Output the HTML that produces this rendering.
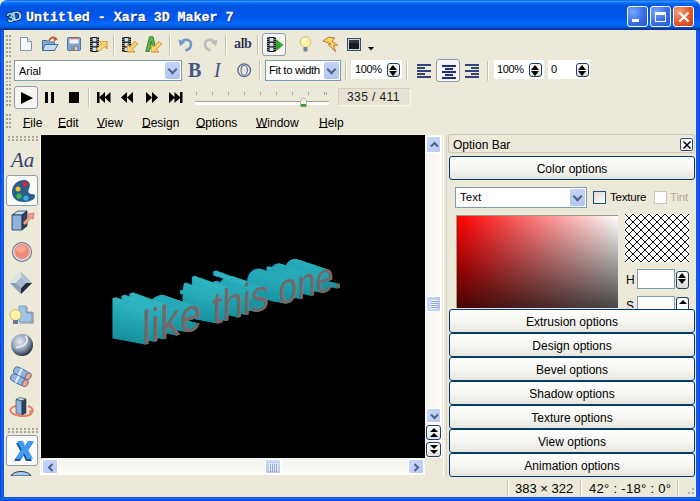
<!DOCTYPE html>
<html><head><meta charset="utf-8">
<style>
*{margin:0;padding:0;box-sizing:border-box}
html,body{width:700px;height:501px;overflow:hidden;background:#ECE9D8}
body{position:relative;font-family:"Liberation Sans",sans-serif;font-size:12px;color:#000}
.a{position:absolute}
.grip{position:absolute;width:5px;background-image:linear-gradient(to right,#A9A697 2px,transparent 2px);background-size:3px 4px;-webkit-mask-image:linear-gradient(to bottom,#000 2px,transparent 2px);-webkit-mask-size:3px 4px}
.hgrip{position:absolute;height:5px;background-image:linear-gradient(to right,#A9A697 2px,transparent 2px);background-size:4px 3px;-webkit-mask-image:linear-gradient(to bottom,#000 2px,transparent 2px);-webkit-mask-size:4px 3px}
.sep{position:absolute;width:2px;border-left:1px solid #C5C2B2;border-right:1px solid #fff}
.pressed{position:absolute;border:1px solid #8E9CB5;border-radius:3px;background:#F6F5EF}
.combo{position:absolute;background:#fff;border:1px solid #7F9DB9}
.dd{position:absolute;right:1px;top:1px;bottom:1px;width:15px;background:linear-gradient(#C6D3F7,#B0C4F2);border-radius:2px}
.dd:after{content:"";position:absolute;left:4px;top:4px;width:5px;height:5px;border-right:2px solid #4D6185;border-bottom:2px solid #4D6185;transform:rotate(45deg)}
.spin{position:absolute;width:13px;height:14px;border:1px solid #1C3F6E;border-radius:3px;background:linear-gradient(#fff,#DCDCD0)}
.spin:before{content:"";position:absolute;left:1px;top:1px;border-left:4.5px solid transparent;border-right:4.5px solid transparent;border-bottom:5px solid #000}
.spin:after{content:"";position:absolute;left:1px;top:7px;border-left:4.5px solid transparent;border-right:4.5px solid transparent;border-top:5px solid #000}
.menu{position:absolute;top:116px;font-size:12px}
.menu u{text-decoration:underline;text-underline-offset:0px;text-decoration-thickness:1px}
.obtn{position:absolute;left:449px;width:246px;height:24px;border:1px solid #003C74;border-radius:3px;background:linear-gradient(#FFFFFF,#F3F3EF 60%,#E6E5DC);text-align:center;line-height:25px;font-size:12px;color:#000}
.sbtn{position:absolute;width:15px;height:15px;border-radius:2px;background:linear-gradient(135deg,#C8D6FB,#B7CAF5);border:1px solid #fff}
</style></head><body>
<!-- window frame -->
<div class="a" style="left:0;top:0;width:700px;height:30px;border-radius:7px 7px 0 0;background:linear-gradient(to bottom,#0058ee 0%,#3593ff 4%,#288eff 6%,#127dff 8%,#036ffc 10%,#0262ee 14%,#0057e5 20%,#0054e3 24%,#0055eb 56%,#005bf5 66%,#026afe 76%,#0062ef 86%,#0052d6 92%,#0040ab 94%,#003092 100%)"></div>
<div class="a" style="left:0;top:30px;width:4px;height:471px;background:linear-gradient(to right,#0831D9,#166AEE 50%,#0855DD)"></div>
<div class="a" style="left:696px;top:30px;width:4px;height:471px;background:linear-gradient(to right,#0855DD,#166AEE 50%,#0831D9)"></div>
<div class="a" style="left:0;top:497px;width:700px;height:4px;background:linear-gradient(#0855DD,#166AEE 50%,#0831D9)"></div>
<!-- title -->
<svg class="a" style="left:5px;top:7px" width="19" height="17" viewBox="0 0 19 17"><text x="1.5" y="14" font-family="Liberation Sans" font-weight="bold" font-size="13" fill="#A4DAF4" stroke="#08265A" stroke-width="1.6" paint-order="stroke" letter-spacing="-1.5" transform="rotate(-12 9 9)">3D</text></svg>
<div class="a" style="left:26px;top:10px;font-family:'Liberation Mono',monospace;font-weight:bold;font-size:13.3px;color:#fff;-webkit-text-stroke:0.3px #fff;text-shadow:1px 1px 0 #0A1E6A;white-space:pre;line-height:16px">Untitled - Xara 3D Maker 7</div>
<!-- title buttons -->
<div class="a" style="left:627px;top:6px;width:21px;height:21px;border:1px solid #fff;border-radius:3px;background:radial-gradient(circle at 25% 25%,#7AA6FA,#3A6EE8 55%,#2554D6)"><div class="a" style="left:4px;top:12px;width:7px;height:3px;background:#fff"></div></div>
<div class="a" style="left:650px;top:6px;width:21px;height:21px;border:1px solid #fff;border-radius:3px;background:radial-gradient(circle at 25% 25%,#7AA6FA,#3A6EE8 55%,#2554D6)"><div class="a" style="left:4px;top:5px;width:11px;height:10px;border:1px solid #fff;border-top-width:3px"></div></div>
<div class="a" style="left:673px;top:6px;width:21px;height:21px;border:1px solid #fff;border-radius:3px;background:radial-gradient(circle at 25% 25%,#F7A080,#DF5A2C 55%,#C8401A)">
<svg class="a" style="left:4px;top:4px" width="12" height="12"><path d="M1.5 1.5L10.5 10.5M10.5 1.5L1.5 10.5" stroke="#fff" stroke-width="2.2"/></svg></div>

<!-- toolbar grips -->
<div class="grip" style="left:6px;top:35px;height:22px"></div>
<div class="grip" style="left:6px;top:61px;height:21px"></div>
<div class="grip" style="left:6px;top:84px;height:23px"></div>
<div class="grip" style="left:6px;top:114px;height:16px"></div>
<!-- row1 icons -->
<svg class="a" style="left:19px;top:36px" width="14" height="16" viewBox="0 0 14 16"><path d="M1.5 1.5H8.5L12.5 5.5V14.5H1.5Z" fill="#F6F9FD" stroke="#8098B5"/><path d="M8.5 1.5V5.5H12.5" fill="#DCE5F0" stroke="#8098B5"/></svg>
<svg class="a" style="left:41px;top:35px" width="18" height="17" viewBox="0 0 18 17"><path d="M1.5 5.5H6L7 7H13.5V15.5H1.5Z" fill="#86AED8" stroke="#3A6A9E"/><path d="M4 9.5H17L13.5 15.5H1.5Z" fill="#C4DCF2" stroke="#3A6A9E"/><path d="M8 6C9 2.5 12 1.5 14.5 3.5" fill="none" stroke="#C9543E" stroke-width="1.8"/><path d="M12.5 1.5L17 4L13 6.5Z" fill="#C9543E"/></svg>
<svg class="a" style="left:66px;top:36px" width="16" height="16" viewBox="0 0 16 16"><rect x="1.5" y="1.5" width="13" height="13" rx="1" fill="#7DA6D4" stroke="#4C74A4"/><rect x="3.5" y="2" width="9" height="5.5" fill="#F2F5F8"/><rect x="3.5" y="2" width="9" height="1.3" fill="#E07A64"/><rect x="5" y="10" width="7" height="4.5" fill="#8C8C90"/><rect x="9" y="11" width="2" height="3" fill="#D8D8D8"/></svg>
<svg class="a" style="left:90px;top:37px" width="9" height="15" viewBox="0 0 9 15"><rect x="0" y="0" width="9" height="15" fill="#141414"/><path d="M1 0V15M8 0V15" stroke="#E8E8E8" stroke-width="1" stroke-dasharray="1 1"/><rect x="2.5" y="1" width="4" height="3.5" fill="#CFE0F5"/><rect x="2.5" y="5.8" width="4" height="3.5" fill="#CFE0F5"/><rect x="2.5" y="10.5" width="4" height="3.5" fill="#CFE0F5"/></svg>
<svg class="a" style="left:96px;top:41px" width="12" height="12" viewBox="0 0 12 12"><path d="M10 0H11V8L8.3 5.3L3 10.6L0.4 8L5.7 2.7L3 0Z" fill="#F9D66A" stroke="#C9762C" stroke-width="0.8"/></svg>
<div class="sep" style="left:113px;top:35px;height:20px"></div>
<svg class="a" style="left:122px;top:37px" width="9" height="15" viewBox="0 0 9 15"><rect x="0" y="0" width="9" height="15" fill="#141414"/><path d="M1 0V15M8 0V15" stroke="#E8E8E8" stroke-width="1" stroke-dasharray="1 1"/><rect x="2.5" y="1" width="4" height="3.5" fill="#CFE0F5"/><rect x="2.5" y="5.8" width="4" height="3.5" fill="#CFE0F5"/><rect x="2.5" y="10.5" width="4" height="3.5" fill="#CFE0F5"/></svg>
<svg class="a" style="left:127px;top:41px" width="12" height="12" viewBox="0 0 12 12"><path d="M1 11H0V3L2.7 5.7L8 0.4L10.6 3L5.3 8.3L8 11Z" fill="#F9D66A" stroke="#C9762C" stroke-width="0.8"/></svg>
<svg class="a" style="left:145px;top:36px" width="12" height="16" viewBox="0 0 12 16"><path d="M0.8 15.5L4.5 0.8H8L11.5 15.5H8.3L7.6 12H4.9L4.2 15.5Z M5.5 9H7L6.25 5Z" fill="#5DBB4C" stroke="#2F7A2A" stroke-width="0.9" fill-rule="evenodd"/></svg>
<svg class="a" style="left:151px;top:41px" width="12" height="12" viewBox="0 0 12 12"><path d="M1 11H0V3L2.7 5.7L8 0.4L10.6 3L5.3 8.3L8 11Z" fill="#F9D66A" stroke="#C9762C" stroke-width="0.8"/></svg>
<div class="sep" style="left:169px;top:35px;height:20px"></div>
<svg class="a" style="left:178px;top:36px" width="16" height="16" viewBox="0 0 16 16"><path d="M4.5 5C8 2.5 13.5 4 13 9C12.5 12.5 9.5 14 7.5 14.5" fill="none" stroke="#6B97C9" stroke-width="2.4"/><path d="M0.5 3.5L2 10L7.5 6Z" fill="#6B97C9"/></svg>
<svg class="a" style="left:202px;top:36px" width="16" height="16" viewBox="0 0 16 16"><path d="M11.5 5C8 2.5 2.5 4 3 9C3.5 12.5 6.5 14 8.5 14.5" fill="none" stroke="#BDBDBD" stroke-width="2.4"/><path d="M15.5 3.5L14 10L8.5 6Z" fill="#BDBDBD"/></svg>
<div class="sep" style="left:225px;top:35px;height:20px"></div>
<div class="a" style="left:234px;top:36px;font-family:'Liberation Serif';font-weight:bold;font-size:14px;color:#2E3E66;letter-spacing:-0.8px;line-height:16px">a<span style="font-weight:normal;color:#000">I</span>b</div>
<div class="sep" style="left:257px;top:35px;height:20px"></div>
<div class="pressed" style="left:262px;top:33px;width:24px;height:23px"></div>
<svg class="a" style="left:267px;top:37px" width="9" height="15" viewBox="0 0 9 15"><rect x="0" y="0" width="9" height="15" fill="#141414"/><path d="M1 0V15M8 0V15" stroke="#E8E8E8" stroke-width="1" stroke-dasharray="1 1"/><rect x="2.5" y="1" width="4" height="3.5" fill="#CFE0F5"/><rect x="2.5" y="5.8" width="4" height="3.5" fill="#CFE0F5"/><rect x="2.5" y="10.5" width="4" height="3.5" fill="#CFE0F5"/></svg>
<svg class="a" style="left:276px;top:39px" width="8" height="12" viewBox="0 0 8 12"><path d="M0 0L7.5 6L0 12Z" fill="#2FA62F"/></svg>
<svg class="a" style="left:299px;top:36px" width="13" height="17" viewBox="0 0 13 17"><circle cx="6.5" cy="6" r="5.3" fill="#FFF0A0" stroke="#CDB05A" stroke-width="0.8"/><ellipse cx="5" cy="4.5" rx="2.2" ry="1.8" fill="#FFFCE8"/><rect x="4.5" y="11" width="4" height="4.5" rx="0.8" fill="#6E86A0"/></svg>
<svg class="a" style="left:322px;top:36px" width="17" height="17" viewBox="0 0 17 17"><path d="M1 5L6.5 1.2L13 2L10 5.2L15.5 9L11.5 9.5L13.5 15.5L6 8.5L9 7.8Z" fill="#F8D95A" stroke="#B4683A" stroke-width="0.9" stroke-linejoin="round"/></svg>
<svg class="a" style="left:347px;top:38px" width="14" height="13" viewBox="0 0 14 13"><rect x="0.5" y="0.5" width="13" height="12" fill="#B9D4EE" stroke="#3E4E66"/><rect x="2" y="2" width="10" height="9" fill="#1A1A1A"/><rect x="2" y="2" width="10" height="3" fill="#383838"/></svg>
<svg class="a" style="left:368px;top:47px" width="7" height="4"><path d="M0 0H6L3 3.5Z" fill="#000"/></svg>
<!-- row2 -->
<div class="combo" style="left:14px;top:60px;width:168px;height:21px"><div class="a" style="left:4px;top:4px;font-size:11px">Arial</div><div class="dd"></div></div>
<div class="a" style="left:188px;top:58px;font-family:'Liberation Serif';font-weight:bold;font-size:20px;line-height:24px;color:#44578A">B</div>
<div class="a" style="left:214px;top:58px;font-family:'Liberation Serif';font-style:italic;font-size:20px;line-height:24px;color:#44578A">I</div>
<svg class="a" style="left:237px;top:63px" width="15" height="15" viewBox="0 0 15 15"><ellipse cx="7.2" cy="7.2" rx="6.3" ry="6.4" fill="none" stroke="#5A6C98" stroke-width="1.3"/><ellipse cx="7.2" cy="7.2" rx="3.2" ry="5" fill="none" stroke="#5A6C98" stroke-width="1.1"/></svg>
<div class="sep" style="left:259px;top:61px;height:20px"></div>
<div class="combo" style="left:265px;top:60px;width:76px;height:21px"><div class="a" style="left:3px;top:3px;font-size:11.5px;letter-spacing:-0.4px">Fit to width</div><div class="dd"></div></div>
<div class="sep" style="left:345px;top:61px;height:20px"></div>
<div class="a" style="left:351px;top:60px;width:51px;height:19px;background:#fff"><div class="a" style="left:4px;top:3px;font-size:11px;letter-spacing:-0.4px">100%</div></div>
<div class="spin" style="left:387px;top:63px"></div>
<div class="sep" style="left:406px;top:61px;height:20px"></div>
<svg class="a" style="left:417px;top:64px" width="15" height="15" viewBox="0 0 15 15"><path d="M0 1H14M0 4H8M0 7H14M0 10H8M0 13H14" stroke="#34447A" stroke-width="2"/></svg>
<div class="pressed" style="left:436px;top:59px;width:24px;height:23px"></div>
<svg class="a" style="left:442px;top:65px" width="15" height="15" viewBox="0 0 15 15"><path d="M0 1H14M3 4H11M0 7H14M3 10H11M0 13H14" stroke="#1E2E78" stroke-width="2"/></svg>
<svg class="a" style="left:465px;top:64px" width="15" height="15" viewBox="0 0 15 15"><path d="M0 1H14M6 4H14M0 7H14M6 10H14M0 13H14" stroke="#34447A" stroke-width="2"/></svg>
<div class="sep" style="left:487px;top:61px;height:20px"></div>
<div class="a" style="left:494px;top:60px;width:50px;height:19px;background:#fff"><div class="a" style="left:3px;top:3px;font-size:11px;letter-spacing:-0.4px">100%</div></div>
<div class="spin" style="left:529px;top:63px"></div>
<div class="a" style="left:548px;top:60px;width:42px;height:19px;background:#fff"><div class="a" style="left:3px;top:3px;font-size:11px">0</div></div>
<div class="spin" style="left:576px;top:63px"></div>
<!-- row3 -->
<div class="pressed" style="left:14px;top:86px;width:24px;height:23px"></div>
<svg class="a" style="left:20px;top:91px" width="14" height="14"><path d="M1 1L13 7L1 13Z" fill="#000"/></svg>
<svg class="a" style="left:45px;top:92px" width="10" height="12"><rect x="0" y="0" width="3" height="11" fill="#000"/><rect x="6" y="0" width="3" height="11" fill="#000"/></svg>
<svg class="a" style="left:69px;top:92px" width="11" height="12"><rect x="0" y="0" width="10" height="11" fill="#000"/></svg>
<div class="sep" style="left:88px;top:87px;height:20px"></div>
<svg class="a" style="left:97px;top:92px" width="14" height="12"><rect x="0" y="0" width="2.5" height="11" fill="#000"/><path d="M8 0V11L2 5.5Z M13.5 0V11L7.5 5.5Z" fill="#000"/></svg>
<svg class="a" style="left:121px;top:92px" width="13" height="12"><path d="M6 0V11L0 5.5Z M12 0V11L6 5.5Z" fill="#000"/></svg>
<svg class="a" style="left:146px;top:92px" width="13" height="12"><path d="M0 0V11L6 5.5Z M6 0V11L12 5.5Z" fill="#000"/></svg>
<svg class="a" style="left:169px;top:92px" width="14" height="12"><path d="M0 0V11L6 5.5Z M5.5 0V11L11.5 5.5Z" fill="#000"/><rect x="11" y="0" width="2.5" height="11" fill="#000"/></svg>
<div class="a" style="left:196px;top:92px;width:130px;height:3px;background-image:linear-gradient(to right,#A9A697 1px,transparent 1px);background-size:16px 3px"></div>
<div class="a" style="left:326px;top:92px;width:1px;height:3px;background:#A9A697"></div>
<div class="a" style="left:195px;top:101px;width:134px;height:4px;border-top:1px solid #A19E8E;background:#fff;border-radius:1px"></div>
<svg class="a" style="left:300px;top:97px" width="7" height="10" viewBox="0 0 7 10"><path d="M0.5 9.5V4L3.5 0.5L6.5 4V9.5Z" fill="#F4F3EE" stroke="#A8A594" stroke-width="0.8"/><rect x="1" y="7" width="5" height="2.5" fill="#27A338"/></svg>
<div class="a" style="left:338px;top:88px;width:73px;height:18px;background:#E6E3D2;border-top:1px solid #D2CFBE;border-left:1px solid #D2CFBE;border-bottom:1px solid #F8F7F0;border-right:1px solid #F8F7F0"><div class="a" style="left:8px;top:1px;font-size:12px;letter-spacing:0.4px;color:#1A1A1A">335 / 411</div></div>
<!-- menu -->
<div class="menu" style="left:23px"><u>F</u>ile</div>
<div class="menu" style="left:58px"><u>E</u>dit</div>
<div class="menu" style="left:97px"><u>V</u>iew</div>
<div class="menu" style="left:142px"><u>D</u>esign</div>
<div class="menu" style="left:196px"><u>O</u>ptions</div>
<div class="menu" style="left:256px"><u>W</u>indow</div>
<div class="menu" style="left:319px"><u>H</u>elp</div>

<!-- left toolbar -->
<div class="hgrip" style="left:8px;top:136px;width:30px"></div>
<div class="a" style="left:11px;top:148px;font-family:'Liberation Serif';font-style:italic;font-size:21px;color:#33446E;letter-spacing:0px">Aa</div>
<div class="pressed" style="left:6px;top:175px;width:32px;height:31px;background:#FBFBF8"></div>
<svg class="a" style="left:11px;top:179px" width="25" height="24" viewBox="0 0 25 24"><path d="M13 1C6 1 1 6 1 13C1 19 6 23 12 23C18 23 24 21 24 17C24 14 20 16 18 14C16 12 19 9 19 6C19 3 16 1 13 1Z" fill="#2D5E8C"/><circle cx="14" cy="5" r="2.5" fill="#E8232A"/><circle cx="7" cy="10" r="2.5" fill="#F2C32E"/><circle cx="8" cy="17" r="2.6" fill="#34C23A"/><circle cx="15" cy="19" r="2.6" fill="#2FB4F0"/></svg>
<svg class="a" style="left:10px;top:209px" width="25" height="24" viewBox="0 0 25 24"><path d="M2 6L8 2H17L12 6Z" fill="#C7DDF2" stroke="#1F3550" stroke-width="0.8"/><path d="M2 6H12V21H2Z" fill="#8FB4D8" stroke="#1F3550" stroke-width="0.8"/><path d="M12 6L17 2V17L12 21Z" fill="#2F4258" stroke="#1F3550" stroke-width="0.8"/><path d="M13 14L19 7L18 5L24 4L23 10L21 9L15 16Z" fill="#F2A08A" stroke="#C85A44" stroke-width="0.6"/></svg>
<svg class="a" style="left:11px;top:241px" width="22" height="22" viewBox="0 0 22 22"><circle cx="11" cy="11" r="10" fill="#6A6E84"/><circle cx="11" cy="11" r="9" fill="#D8D9E4"/><circle cx="11" cy="10.5" r="7.5" fill="#F08B74"/><ellipse cx="10" cy="8" rx="5" ry="3.5" fill="#F5A592"/></svg>
<svg class="a" style="left:9px;top:271px" width="24" height="24" viewBox="0 0 24 24"><path d="M12 1L23 12L12 23L1 12Z" fill="#9DB0C6"/><path d="M1 12L12 1L12 7L7 12Z" fill="#D9E3EE"/><path d="M12 1L23 12L17 12L12 7Z" fill="#AFC1D5"/><path d="M1 12H7L12 17V23Z" fill="#8CA0B8"/><path d="M23 12L12 23V17L17 12Z" fill="#1F2A38"/><path d="M12 7L17 12L12 17L7 12Z" fill="#A3B6CC"/></svg>
<svg class="a" style="left:9px;top:303px" width="25" height="24" viewBox="0 0 25 24"><path d="M10 3H17V9H23V19H10Z" fill="#9FC4EA" stroke="#6A8DB2" stroke-width="0.8"/><path d="M18 4V10H24V20H11" fill="none" stroke="#8A9099" stroke-width="1.2"/><circle cx="6.5" cy="12" r="5.5" fill="#FFF1A6" stroke="#C9A74A" stroke-width="0.8"/><rect x="4" y="17" width="5" height="4" fill="#6D7A8E"/></svg>
<svg class="a" style="left:10px;top:333px" width="24" height="24" viewBox="0 0 24 24"><defs><radialGradient id="gl" cx="40%" cy="35%" r="65%"><stop offset="0" stop-color="#E8EEF5"/><stop offset="0.6" stop-color="#8C9DB3"/><stop offset="1" stop-color="#2B3645"/></radialGradient></defs><circle cx="12" cy="12" r="11" fill="url(#gl)"/><path d="M6 15C9 12 12 16 16 10C18 7 17 4 15 3" stroke="#F2F5F9" stroke-width="2" fill="none" opacity="0.8"/></svg>
<svg class="a" style="left:9px;top:365px" width="25" height="22" viewBox="0 0 25 22"><g transform="translate(5,4) rotate(27)"><rect x="0" y="-3.8" width="16" height="7.6" rx="3.5" fill="#8FB6E2" stroke="#3D6290" stroke-width="0.8"/><rect x="6" y="-3.8" width="2" height="7.6" fill="#E6EEF8"/><ellipse cx="16" cy="0" rx="2.6" ry="3.8" fill="#F2A585" stroke="#3D6290" stroke-width="0.8"/></g><g transform="translate(2,11) rotate(27)"><rect x="0" y="-3.8" width="16" height="7.6" rx="3.5" fill="#8FB6E2" stroke="#3D6290" stroke-width="0.8"/><rect x="6" y="-3.8" width="2" height="7.6" fill="#E6EEF8"/><ellipse cx="16" cy="0" rx="2.6" ry="3.8" fill="#F2A585" stroke="#3D6290" stroke-width="0.8"/></g></svg>
<svg class="a" style="left:9px;top:396px" width="25" height="24" viewBox="0 0 25 24"><path d="M7 10C3 11 1 13 1.5 15C2.5 18 8 20 13 20C19 20 23 18 23.5 15C24 13 22 11 19 10" fill="none" stroke="#E8806A" stroke-width="2"/><path d="M7 3.5L11 1.5L17 3L13 5Z" fill="#C9DDF2" stroke="#26374D" stroke-width="0.6"/><path d="M7 3.5L13 5V19L7 17Z" fill="#8DB5DE" stroke="#26374D" stroke-width="0.6"/><path d="M13 5L17 3V17L13 19Z" fill="#2E4157" stroke="#26374D" stroke-width="0.6"/><path d="M9 18.5C11 19.5 12 20 13 20C18 20 21 19 22.5 17" fill="none" stroke="#E8806A" stroke-width="2"/><path d="M20 14L25 15L21 19Z" fill="#E8806A"/></svg>
<div class="hgrip" style="left:8px;top:428px;width:30px"></div>
<div class="pressed" style="left:6px;top:435px;width:32px;height:31px;background:#FBFBF8"></div>
<svg class="a" style="left:12px;top:440px" width="22" height="23" viewBox="0 0 22 23"><path d="M4 3H10L12 8L15 3H21L15 11.5L20 21H14L11.5 15.5L8 21H2L8.5 11.5Z" fill="#1F4F92"/><path d="M5 1H11L13 6L16 1H22L16 9.5L21 19H15L12.5 13.5L9 19H3L9.5 9.5Z" fill="#3D9CF2"/></svg>
<svg class="a" style="left:10px;top:469px" width="22" height="7"><path d="M1 7C3 1 19 1 21 7Z" fill="#A8C8EC" stroke="#2A3D55" stroke-width="1"/></svg>
<!-- canvas -->
<div class="a" style="left:40px;top:134px;width:386px;height:1px;background:#F6F5EE"></div><div class="a" style="left:40px;top:134px;width:1px;height:342px;background:#F6F5EE"></div><div class="a" style="left:41px;top:135px;width:384px;height:323px;background:#000;overflow:hidden" id="cv"><svg class="a" style="left:0;top:0" width="385" height="323" font-family="Liberation Sans" font-size="48"><defs><linearGradient id="tg" x1="0" y1="0" x2="0" y2="1"><stop offset="0" stop-color="#36BCCA"/><stop offset="0.5" stop-color="#20A2B0"/><stop offset="1" stop-color="#158490"/></linearGradient></defs><g fill="url(#tg)"><text transform="matrix(0.996,-0.291,0,1.170,68.2,204.7)">l</text><text transform="matrix(0.986,-0.288,0,1.163,77.3,202.0)">i</text><text transform="matrix(0.971,-0.283,0,1.156,85.3,199.4)">k</text><text transform="matrix(0.947,-0.277,0,1.139,105.1,193.5)">e</text><text transform="matrix(0.917,-0.268,0,1.112,138.3,184.1)">t</text><text transform="matrix(0.898,-0.262,0,1.103,147.9,181.0)">h</text><text transform="matrix(0.881,-0.257,0,1.085,169.4,175.0)">i</text><text transform="matrix(0.865,-0.253,0,1.078,176.6,172.6)">s</text><text transform="matrix(0.829,-0.242,0,1.053,203.9,164.5)">o</text><text transform="matrix(0.805,-0.235,0,1.035,222.9,159.0)">n</text><text transform="matrix(0.780,-0.228,0,1.017,241.3,153.6)">e</text><text transform="matrix(0.762,-0.222,0,0.999,259.9,148.3)">&#46;</text></g><g fill="url(#tg)"><text transform="matrix(0.990,-0.289,0,1.163,69.5,204.9)">l</text><text transform="matrix(0.980,-0.286,0,1.156,78.6,202.3)">i</text><text transform="matrix(0.965,-0.282,0,1.149,86.7,199.6)">k</text><text transform="matrix(0.941,-0.275,0,1.132,106.5,193.8)">e</text><text transform="matrix(0.911,-0.266,0,1.106,139.6,184.3)">t</text><text transform="matrix(0.893,-0.261,0,1.097,149.3,181.2)">h</text><text transform="matrix(0.876,-0.256,0,1.079,170.8,175.2)">i</text><text transform="matrix(0.860,-0.251,0,1.072,178.0,172.8)">s</text><text transform="matrix(0.824,-0.241,0,1.047,205.3,164.8)">o</text><text transform="matrix(0.800,-0.234,0,1.029,224.3,159.2)">n</text><text transform="matrix(0.776,-0.226,0,1.011,242.7,153.8)">e</text><text transform="matrix(0.757,-0.221,0,0.993,261.3,148.6)">&#46;</text></g><g fill="url(#tg)"><text transform="matrix(0.984,-0.287,0,1.156,70.9,205.2)">l</text><text transform="matrix(0.975,-0.285,0,1.149,80.0,202.5)">i</text><text transform="matrix(0.959,-0.280,0,1.142,88.2,199.9)">k</text><text transform="matrix(0.936,-0.273,0,1.126,107.9,194.0)">e</text><text transform="matrix(0.905,-0.264,0,1.099,141.0,184.6)">t</text><text transform="matrix(0.887,-0.259,0,1.090,150.7,181.5)">h</text><text transform="matrix(0.870,-0.254,0,1.072,172.1,175.5)">i</text><text transform="matrix(0.854,-0.250,0,1.065,179.4,173.1)">s</text><text transform="matrix(0.819,-0.239,0,1.040,206.7,165.0)">o</text><text transform="matrix(0.795,-0.232,0,1.022,225.7,159.5)">n</text><text transform="matrix(0.771,-0.225,0,1.005,244.1,154.1)">e</text><text transform="matrix(0.753,-0.220,0,0.987,262.6,148.8)">&#46;</text></g><g fill="url(#tg)"><text transform="matrix(0.978,-0.286,0,1.149,72.3,205.4)">l</text><text transform="matrix(0.969,-0.283,0,1.142,81.4,202.7)">i</text><text transform="matrix(0.953,-0.278,0,1.135,89.6,200.1)">k</text><text transform="matrix(0.930,-0.272,0,1.119,109.3,194.3)">e</text><text transform="matrix(0.900,-0.263,0,1.092,142.4,184.8)">t</text><text transform="matrix(0.882,-0.257,0,1.083,152.1,181.7)">h</text><text transform="matrix(0.865,-0.253,0,1.066,173.5,175.7)">i</text><text transform="matrix(0.849,-0.248,0,1.059,180.8,173.3)">s</text><text transform="matrix(0.814,-0.238,0,1.034,208.1,165.3)">o</text><text transform="matrix(0.790,-0.231,0,1.016,227.1,159.7)">n</text><text transform="matrix(0.766,-0.224,0,0.998,245.5,154.3)">e</text><text transform="matrix(0.748,-0.218,0,0.981,264.0,149.1)">&#46;</text></g><g fill="url(#tg)"><text transform="matrix(0.972,-0.284,0,1.142,73.6,205.7)">l</text><text transform="matrix(0.963,-0.281,0,1.135,82.7,203.0)">i</text><text transform="matrix(0.947,-0.277,0,1.128,91.0,200.3)">k</text><text transform="matrix(0.924,-0.270,0,1.112,110.7,194.5)">e</text><text transform="matrix(0.894,-0.261,0,1.085,143.7,185.0)">t</text><text transform="matrix(0.876,-0.256,0,1.077,153.5,182.0)">h</text><text transform="matrix(0.860,-0.251,0,1.059,174.9,176.0)">i</text><text transform="matrix(0.844,-0.246,0,1.052,182.2,173.6)">s</text><text transform="matrix(0.809,-0.236,0,1.027,209.5,165.5)">o</text><text transform="matrix(0.785,-0.229,0,1.010,228.5,160.0)">n</text><text transform="matrix(0.761,-0.222,0,0.992,246.9,154.6)">e</text><text transform="matrix(0.743,-0.217,0,0.975,265.4,149.3)">&#46;</text></g><g fill="url(#tg)"><text transform="matrix(0.966,-0.282,0,1.135,75.0,205.9)">l</text><text transform="matrix(0.957,-0.279,0,1.128,84.1,203.2)">i</text><text transform="matrix(0.941,-0.275,0,1.121,92.4,200.6)">k</text><text transform="matrix(0.919,-0.268,0,1.105,112.2,194.7)">e</text><text transform="matrix(0.889,-0.260,0,1.079,145.1,185.3)">t</text><text transform="matrix(0.871,-0.254,0,1.070,154.9,182.2)">h</text><text transform="matrix(0.854,-0.249,0,1.052,176.2,176.2)">i</text><text transform="matrix(0.839,-0.245,0,1.045,183.6,173.8)">s</text><text transform="matrix(0.804,-0.235,0,1.021,210.9,165.8)">o</text><text transform="matrix(0.780,-0.228,0,1.004,229.9,160.2)">n</text><text transform="matrix(0.757,-0.221,0,0.986,248.3,154.8)">e</text><text transform="matrix(0.739,-0.216,0,0.969,266.7,149.6)">&#46;</text></g><g fill="url(#tg)"><text transform="matrix(0.960,-0.280,0,1.127,76.4,206.1)">l</text><text transform="matrix(0.951,-0.278,0,1.121,85.5,203.5)">i</text><text transform="matrix(0.935,-0.273,0,1.114,93.8,200.8)">k</text><text transform="matrix(0.913,-0.267,0,1.098,113.6,195.0)">e</text><text transform="matrix(0.883,-0.258,0,1.072,146.5,185.5)">t</text><text transform="matrix(0.865,-0.253,0,1.063,156.3,182.5)">h</text><text transform="matrix(0.849,-0.248,0,1.046,177.6,176.5)">i</text><text transform="matrix(0.834,-0.243,0,1.039,185.0,174.1)">s</text><text transform="matrix(0.799,-0.233,0,1.015,212.3,166.0)">o</text><text transform="matrix(0.776,-0.226,0,0.997,231.3,160.5)">n</text><text transform="matrix(0.752,-0.220,0,0.980,249.7,155.1)">e</text><text transform="matrix(0.734,-0.214,0,0.963,268.1,149.9)">&#46;</text></g><g fill="url(#tg)"><text transform="matrix(0.954,-0.279,0,1.120,77.7,206.4)">l</text><text transform="matrix(0.945,-0.276,0,1.114,86.8,203.7)">i</text><text transform="matrix(0.929,-0.271,0,1.107,95.2,201.1)">k</text><text transform="matrix(0.907,-0.265,0,1.091,115.0,195.2)">e</text><text transform="matrix(0.878,-0.256,0,1.065,147.9,185.8)">t</text><text transform="matrix(0.860,-0.251,0,1.057,157.7,182.7)">h</text><text transform="matrix(0.844,-0.246,0,1.039,179.0,176.7)">i</text><text transform="matrix(0.828,-0.242,0,1.032,186.4,174.3)">s</text><text transform="matrix(0.794,-0.232,0,1.008,213.7,166.3)">o</text><text transform="matrix(0.771,-0.225,0,0.991,232.7,160.7)">n</text><text transform="matrix(0.747,-0.218,0,0.974,251.1,155.4)">e</text><text transform="matrix(0.730,-0.213,0,0.957,269.5,150.1)">&#46;</text></g><g fill="url(#tg)"><text transform="matrix(0.948,-0.277,0,1.113,79.1,206.6)">l</text><text transform="matrix(0.939,-0.274,0,1.106,88.2,204.0)">i</text><text transform="matrix(0.924,-0.270,0,1.100,96.6,201.3)">k</text><text transform="matrix(0.901,-0.263,0,1.084,116.4,195.5)">e</text><text transform="matrix(0.872,-0.255,0,1.058,149.2,186.0)">t</text><text transform="matrix(0.855,-0.250,0,1.050,159.1,183.0)">h</text><text transform="matrix(0.838,-0.245,0,1.033,180.3,177.0)">i</text><text transform="matrix(0.823,-0.240,0,1.026,187.8,174.6)">s</text><text transform="matrix(0.789,-0.230,0,1.002,215.1,166.6)">o</text><text transform="matrix(0.766,-0.224,0,0.985,234.1,161.0)">n</text><text transform="matrix(0.742,-0.217,0,0.968,252.5,155.6)">e</text><text transform="matrix(0.725,-0.212,0,0.950,270.8,150.4)">&#46;</text></g><g fill="url(#tg)"><text transform="matrix(0.942,-0.275,0,1.106,80.5,206.9)">l</text><text transform="matrix(0.933,-0.272,0,1.099,89.6,204.2)">i</text><text transform="matrix(0.918,-0.268,0,1.093,98.0,201.6)">k</text><text transform="matrix(0.896,-0.262,0,1.077,117.8,195.7)">e</text><text transform="matrix(0.867,-0.253,0,1.052,150.6,186.3)">t</text><text transform="matrix(0.849,-0.248,0,1.043,160.5,183.2)">h</text><text transform="matrix(0.833,-0.243,0,1.026,181.7,177.2)">i</text><text transform="matrix(0.818,-0.239,0,1.019,189.2,174.8)">s</text><text transform="matrix(0.784,-0.229,0,0.996,216.5,166.8)">o</text><text transform="matrix(0.761,-0.222,0,0.979,235.5,161.3)">n</text><text transform="matrix(0.738,-0.215,0,0.961,253.9,155.9)">e</text><text transform="matrix(0.720,-0.210,0,0.944,272.2,150.6)">&#46;</text></g><g fill="url(#tg)"><text transform="matrix(0.936,-0.273,0,1.099,81.8,207.1)">l</text><text transform="matrix(0.927,-0.271,0,1.092,90.9,204.4)">i</text><text transform="matrix(0.912,-0.266,0,1.086,99.4,201.8)">k</text><text transform="matrix(0.890,-0.260,0,1.070,119.2,196.0)">e</text><text transform="matrix(0.861,-0.251,0,1.045,152.0,186.5)">t</text><text transform="matrix(0.844,-0.246,0,1.037,161.9,183.5)">h</text><text transform="matrix(0.828,-0.242,0,1.020,183.0,177.5)">i</text><text transform="matrix(0.813,-0.237,0,1.013,190.6,175.1)">s</text><text transform="matrix(0.779,-0.228,0,0.989,217.9,167.1)">o</text><text transform="matrix(0.756,-0.221,0,0.972,236.9,161.5)">n</text><text transform="matrix(0.733,-0.214,0,0.955,255.3,156.1)">e</text><text transform="matrix(0.716,-0.209,0,0.938,273.6,150.9)">&#46;</text></g><g fill="url(#tg)"><text transform="matrix(0.930,-0.272,0,1.092,83.2,207.3)">l</text><text transform="matrix(0.921,-0.269,0,1.085,92.3,204.7)">i</text><text transform="matrix(0.906,-0.265,0,1.079,100.8,202.0)">k</text><text transform="matrix(0.884,-0.258,0,1.064,120.6,196.2)">e</text><text transform="matrix(0.855,-0.250,0,1.038,153.3,186.8)">t</text><text transform="matrix(0.838,-0.245,0,1.030,163.3,183.7)">h</text><text transform="matrix(0.822,-0.240,0,1.013,184.4,177.7)">i</text><text transform="matrix(0.807,-0.236,0,1.006,192.0,175.3)">s</text><text transform="matrix(0.774,-0.226,0,0.983,219.3,167.3)">o</text><text transform="matrix(0.751,-0.219,0,0.966,238.3,161.8)">n</text><text transform="matrix(0.728,-0.213,0,0.949,256.7,156.4)">e</text><text transform="matrix(0.711,-0.208,0,0.932,274.9,151.2)">&#46;</text></g><g fill="url(#tg)"><text transform="matrix(0.924,-0.270,0,1.085,84.6,207.6)">l</text><text transform="matrix(0.915,-0.267,0,1.078,93.7,204.9)">i</text><text transform="matrix(0.900,-0.263,0,1.072,102.2,202.3)">k</text><text transform="matrix(0.878,-0.256,0,1.057,122.0,196.5)">e</text><text transform="matrix(0.850,-0.248,0,1.032,154.7,187.0)">t</text><text transform="matrix(0.833,-0.243,0,1.023,164.7,184.0)">h</text><text transform="matrix(0.817,-0.239,0,1.006,185.8,177.9)">i</text><text transform="matrix(0.802,-0.234,0,1.000,193.4,175.6)">s</text><text transform="matrix(0.769,-0.225,0,0.976,220.7,167.6)">o</text><text transform="matrix(0.746,-0.218,0,0.960,239.7,162.0)">n</text><text transform="matrix(0.724,-0.211,0,0.943,258.1,156.6)">e</text><text transform="matrix(0.707,-0.206,0,0.926,276.3,151.4)">&#46;</text></g><g fill="url(#tg)"><text transform="matrix(0.918,-0.268,0,1.078,85.9,207.8)">l</text><text transform="matrix(0.909,-0.265,0,1.071,95.0,205.2)">i</text><text transform="matrix(0.894,-0.261,0,1.065,103.6,202.5)">k</text><text transform="matrix(0.873,-0.255,0,1.050,123.4,196.7)">e</text><text transform="matrix(0.844,-0.247,0,1.025,156.1,187.3)">t</text><text transform="matrix(0.827,-0.242,0,1.017,166.1,184.2)">h</text><text transform="matrix(0.812,-0.237,0,1.000,187.1,178.2)">i</text><text transform="matrix(0.797,-0.233,0,0.993,194.8,175.8)">s</text><text transform="matrix(0.764,-0.223,0,0.970,222.1,167.8)">o</text><text transform="matrix(0.741,-0.217,0,0.953,241.1,162.3)">n</text><text transform="matrix(0.719,-0.210,0,0.937,259.5,156.9)">e</text><text transform="matrix(0.702,-0.205,0,0.920,277.7,151.7)">&#46;</text></g><g fill="url(#tg)"><text transform="matrix(0.912,-0.266,0,1.071,87.3,208.1)">l</text><text transform="matrix(0.903,-0.264,0,1.064,96.4,205.4)">i</text><text transform="matrix(0.888,-0.259,0,1.058,105.0,202.8)">k</text><text transform="matrix(0.867,-0.253,0,1.043,124.8,196.9)">e</text><text transform="matrix(0.839,-0.245,0,1.018,157.4,187.5)">t</text><text transform="matrix(0.822,-0.240,0,1.010,167.5,184.5)">h</text><text transform="matrix(0.806,-0.235,0,0.993,188.5,178.4)">i</text><text transform="matrix(0.792,-0.231,0,0.987,196.2,176.1)">s</text><text transform="matrix(0.759,-0.222,0,0.964,223.5,168.1)">o</text><text transform="matrix(0.737,-0.215,0,0.947,242.5,162.5)">n</text><text transform="matrix(0.714,-0.209,0,0.931,260.9,157.1)">e</text><text transform="matrix(0.697,-0.204,0,0.914,279.0,151.9)">&#46;</text></g><g fill="url(#tg)"><text transform="matrix(0.906,-0.264,0,1.064,88.7,208.3)">l</text><text transform="matrix(0.897,-0.262,0,1.057,97.8,205.6)">i</text><text transform="matrix(0.882,-0.258,0,1.051,106.4,203.0)">k</text><text transform="matrix(0.861,-0.251,0,1.036,126.3,197.2)">e</text><text transform="matrix(0.833,-0.243,0,1.011,158.8,187.8)">t</text><text transform="matrix(0.817,-0.238,0,1.003,169.0,184.7)">h</text><text transform="matrix(0.801,-0.234,0,0.987,189.8,178.7)">i</text><text transform="matrix(0.786,-0.230,0,0.980,197.6,176.3)">s</text><text transform="matrix(0.754,-0.220,0,0.957,224.9,168.3)">o</text><text transform="matrix(0.732,-0.214,0,0.941,243.9,162.8)">n</text><text transform="matrix(0.709,-0.207,0,0.925,262.3,157.4)">e</text><text transform="matrix(0.693,-0.202,0,0.908,280.4,152.2)">&#46;</text></g><g fill="url(#tg)"><text transform="matrix(0.900,-0.263,0,1.057,90.0,208.5)">l</text><text transform="matrix(0.891,-0.260,0,1.050,99.1,205.9)">i</text><text transform="matrix(0.876,-0.256,0,1.044,107.8,203.3)">k</text><text transform="matrix(0.855,-0.250,0,1.029,127.7,197.4)">e</text><text transform="matrix(0.828,-0.242,0,1.005,160.2,188.0)">t</text><text transform="matrix(0.811,-0.237,0,0.996,170.4,184.9)">h</text><text transform="matrix(0.796,-0.232,0,0.980,191.2,178.9)">i</text><text transform="matrix(0.781,-0.228,0,0.974,199.0,176.6)">s</text><text transform="matrix(0.749,-0.219,0,0.951,226.3,168.6)">o</text><text transform="matrix(0.727,-0.212,0,0.935,245.3,163.0)">n</text><text transform="matrix(0.705,-0.206,0,0.918,263.7,157.7)">e</text><text transform="matrix(0.688,-0.201,0,0.902,281.7,152.4)">&#46;</text></g><g fill="url(#tg)"><text transform="matrix(0.894,-0.261,0,1.050,91.4,208.8)">l</text><text transform="matrix(0.885,-0.258,0,1.043,100.5,206.1)">i</text><text transform="matrix(0.871,-0.254,0,1.037,109.2,203.5)">k</text><text transform="matrix(0.850,-0.248,0,1.022,129.1,197.7)">e</text><text transform="matrix(0.822,-0.240,0,0.998,161.6,188.3)">t</text><text transform="matrix(0.806,-0.235,0,0.990,171.8,185.2)">h</text><text transform="matrix(0.790,-0.231,0,0.974,192.6,179.2)">i</text><text transform="matrix(0.776,-0.227,0,0.967,200.4,176.8)">s</text><text transform="matrix(0.744,-0.217,0,0.945,227.7,168.8)">o</text><text transform="matrix(0.722,-0.211,0,0.928,246.7,163.3)">n</text><text transform="matrix(0.700,-0.204,0,0.912,265.1,157.9)">e</text><text transform="matrix(0.683,-0.200,0,0.896,283.1,152.7)">&#46;</text></g><g fill="url(#tg)"><text transform="matrix(0.888,-0.259,0,1.042,92.8,209.0)">l</text><text transform="matrix(0.879,-0.257,0,1.036,101.8,206.4)">i</text><text transform="matrix(0.865,-0.253,0,1.030,110.6,203.7)">k</text><text transform="matrix(0.844,-0.246,0,1.015,130.5,197.9)">e</text><text transform="matrix(0.817,-0.238,0,0.991,162.9,188.5)">t</text><text transform="matrix(0.800,-0.234,0,0.983,173.2,185.4)">h</text><text transform="matrix(0.785,-0.229,0,0.967,193.9,179.4)">i</text><text transform="matrix(0.771,-0.225,0,0.961,201.8,177.1)">s</text><text transform="matrix(0.739,-0.216,0,0.938,229.1,169.1)">o</text><text transform="matrix(0.717,-0.209,0,0.922,248.1,163.5)">n</text><text transform="matrix(0.695,-0.203,0,0.906,266.5,158.2)">e</text><text transform="matrix(0.679,-0.198,0,0.890,284.5,153.0)">&#46;</text></g><g fill="url(#tg)"><text transform="matrix(0.882,-0.257,0,1.035,94.1,209.3)">l</text><text transform="matrix(0.873,-0.255,0,1.029,103.2,206.6)">i</text><text transform="matrix(0.859,-0.251,0,1.023,112.0,204.0)">k</text><text transform="matrix(0.838,-0.245,0,1.008,131.9,198.2)">e</text><text transform="matrix(0.811,-0.237,0,0.984,164.3,188.7)">t</text><text transform="matrix(0.795,-0.232,0,0.976,174.6,185.7)">h</text><text transform="matrix(0.780,-0.228,0,0.960,195.3,179.7)">i</text><text transform="matrix(0.765,-0.224,0,0.954,203.2,177.3)">s</text><text transform="matrix(0.734,-0.214,0,0.932,230.5,169.3)">o</text><text transform="matrix(0.712,-0.208,0,0.916,249.5,163.8)">n</text><text transform="matrix(0.691,-0.202,0,0.900,267.9,158.4)">e</text><text transform="matrix(0.674,-0.197,0,0.884,285.8,153.2)">&#46;</text></g><g fill="url(#tg)"><text transform="matrix(0.876,-0.256,0,1.028,95.5,209.5)">l</text><text transform="matrix(0.867,-0.253,0,1.022,104.6,206.9)">i</text><text transform="matrix(0.853,-0.249,0,1.016,113.4,204.2)">k</text><text transform="matrix(0.833,-0.243,0,1.001,133.3,198.4)">e</text><text transform="matrix(0.806,-0.235,0,0.978,165.7,189.0)">t</text><text transform="matrix(0.789,-0.230,0,0.970,176.0,185.9)">h</text><text transform="matrix(0.774,-0.226,0,0.954,196.7,179.9)">i</text><text transform="matrix(0.760,-0.222,0,0.948,204.6,177.6)">s</text><text transform="matrix(0.729,-0.213,0,0.925,231.9,169.6)">o</text><text transform="matrix(0.707,-0.207,0,0.910,250.9,164.0)">n</text><text transform="matrix(0.686,-0.200,0,0.894,269.3,158.7)">e</text><text transform="matrix(0.670,-0.196,0,0.878,287.2,153.5)">&#46;</text></g><g fill="url(#tg)"><text transform="matrix(0.870,-0.254,0,1.021,96.9,209.8)">l</text><text transform="matrix(0.861,-0.251,0,1.015,105.9,207.1)">i</text><text transform="matrix(0.847,-0.247,0,1.009,114.8,204.5)">k</text><text transform="matrix(0.827,-0.241,0,0.995,134.7,198.6)">e</text><text transform="matrix(0.800,-0.234,0,0.971,167.0,189.2)">t</text><text transform="matrix(0.784,-0.229,0,0.963,177.4,186.2)">h</text><text transform="matrix(0.769,-0.225,0,0.947,198.0,180.2)">i</text><text transform="matrix(0.755,-0.220,0,0.941,205.9,177.8)">s</text><text transform="matrix(0.724,-0.211,0,0.919,233.3,169.8)">o</text><text transform="matrix(0.703,-0.205,0,0.903,252.3,164.3)">n</text><text transform="matrix(0.681,-0.199,0,0.888,270.7,158.9)">e</text><text transform="matrix(0.665,-0.194,0,0.872,288.6,153.7)">&#46;</text></g><g fill="url(#tg)"><text transform="matrix(0.864,-0.252,0,1.014,98.2,210.0)">l</text><text transform="matrix(0.855,-0.250,0,1.008,107.3,207.3)">i</text><text transform="matrix(0.841,-0.246,0,1.002,116.2,204.7)">k</text><text transform="matrix(0.821,-0.240,0,0.988,136.1,198.9)">e</text><text transform="matrix(0.794,-0.232,0,0.964,168.4,189.5)">t</text><text transform="matrix(0.778,-0.227,0,0.956,178.8,186.4)">h</text><text transform="matrix(0.764,-0.223,0,0.941,199.4,180.4)">i</text><text transform="matrix(0.750,-0.219,0,0.935,207.3,178.1)">s</text><text transform="matrix(0.719,-0.210,0,0.913,234.7,170.1)">o</text><text transform="matrix(0.698,-0.204,0,0.897,253.7,164.6)">n</text><text transform="matrix(0.676,-0.197,0,0.881,272.1,159.2)">e</text><text transform="matrix(0.660,-0.193,0,0.866,289.9,154.0)">&#46;</text></g><g fill="url(#tg)"><text transform="matrix(0.858,-0.250,0,1.007,99.6,210.2)">l</text><text transform="matrix(0.849,-0.248,0,1.001,108.7,207.6)">i</text><text transform="matrix(0.835,-0.244,0,0.995,117.6,205.0)">k</text><text transform="matrix(0.815,-0.238,0,0.981,137.5,199.1)">e</text><text transform="matrix(0.789,-0.230,0,0.957,169.8,189.7)">t</text><text transform="matrix(0.773,-0.226,0,0.950,180.2,186.7)">h</text><text transform="matrix(0.758,-0.221,0,0.934,200.7,180.7)">i</text><text transform="matrix(0.745,-0.217,0,0.928,208.7,178.3)">s</text><text transform="matrix(0.714,-0.208,0,0.906,236.1,170.3)">o</text><text transform="matrix(0.693,-0.202,0,0.891,255.1,164.8)">n</text><text transform="matrix(0.672,-0.196,0,0.875,273.5,159.4)">e</text><text transform="matrix(0.656,-0.191,0,0.860,291.3,154.2)">&#46;</text></g><g fill="url(#tg)"><text transform="matrix(0.852,-0.249,0,1.000,100.9,210.5)">l</text><text transform="matrix(0.843,-0.246,0,0.994,110.0,207.8)">i</text><text transform="matrix(0.829,-0.242,0,0.988,119.0,205.2)">k</text><text transform="matrix(0.810,-0.236,0,0.974,138.9,199.4)">e</text><text transform="matrix(0.783,-0.229,0,0.951,171.2,190.0)">t</text><text transform="matrix(0.768,-0.224,0,0.943,181.6,186.9)">h</text><text transform="matrix(0.753,-0.220,0,0.928,202.1,180.9)">i</text><text transform="matrix(0.739,-0.216,0,0.921,210.1,178.6)">s</text><text transform="matrix(0.709,-0.207,0,0.900,237.6,170.6)">o</text><text transform="matrix(0.688,-0.201,0,0.885,256.5,165.1)">n</text><text transform="matrix(0.667,-0.195,0,0.869,274.8,159.7)">e</text><text transform="matrix(0.651,-0.190,0,0.854,292.7,154.5)">&#46;</text></g><g fill="#7A6666"><text transform="matrix(0.852,-0.249,0,1.000,100.9,210.5)">l</text><text transform="matrix(0.843,-0.246,0,0.994,110.0,207.8)">i</text><text transform="matrix(0.829,-0.242,0,0.988,119.0,205.2)">k</text><text transform="matrix(0.810,-0.236,0,0.974,138.9,199.4)">e</text><text transform="matrix(0.783,-0.229,0,0.951,171.2,190.0)">t</text><text transform="matrix(0.768,-0.224,0,0.943,181.6,186.9)">h</text><text transform="matrix(0.753,-0.220,0,0.928,202.1,180.9)">i</text><text transform="matrix(0.739,-0.216,0,0.921,210.1,178.6)">s</text><text transform="matrix(0.709,-0.207,0,0.900,237.6,170.6)">o</text><text transform="matrix(0.688,-0.201,0,0.885,256.5,165.1)">n</text><text transform="matrix(0.667,-0.195,0,0.869,274.8,159.7)">e</text><text transform="matrix(0.651,-0.190,0,0.854,292.7,154.5)">.</text></g></svg></div>
<!-- vertical scrollbar -->
<div class="a" style="left:425px;top:135px;width:17px;height:323px;background:linear-gradient(to right,#F3F1EC,#FEFEFB)"></div>
<div class="sbtn" style="left:426px;top:136px;width:15px;height:17px"><svg class="a" style="left:3px;top:4px" width="9" height="7"><path d="M1 5.5L4.5 2L8 5.5" stroke="#4D6185" stroke-width="2" fill="none"/></svg></div>
<div class="sbtn" style="left:426px;top:296px;width:15px;height:16px;background:linear-gradient(to right,#C9D8FC,#B8CBF6)"><svg class="a" style="left:3px;top:3px" width="9" height="9"><path d="M0 0.5H8M0 2.5H8M0 4.5H8M0 6.5H8M0 8.5H8" stroke="#EEF3FE" stroke-width="1"/><path d="M1 1.5H9M1 3.5H9M1 5.5H9M1 7.5H9" stroke="#8CA6E0" stroke-width="1"/></svg></div>
<div class="sbtn" style="left:426px;top:408px;width:15px;height:15px"><svg class="a" style="left:3px;top:4px" width="9" height="7"><path d="M1 1.5L4.5 5L8 1.5" stroke="#4D6185" stroke-width="2" fill="none"/></svg></div>
<div class="a" style="left:426px;top:425px;width:15px;height:15px;border:1px solid #1C3F6E;border-radius:3px;background:linear-gradient(#fff,#E4E2D8)"><svg class="a" style="left:2px;top:1px" width="10" height="11"><path d="M1 5L5 1L9 5Z M1 10L5 6L9 10Z" fill="#000"/></svg></div>
<div class="a" style="left:426px;top:442px;width:15px;height:15px;border:1px solid #1C3F6E;border-radius:3px;background:linear-gradient(#fff,#E4E2D8)"><svg class="a" style="left:2px;top:1px" width="10" height="11"><path d="M1 1L5 5L9 1Z M1 6L5 10L9 6Z" fill="#000"/></svg></div>
<!-- horizontal scrollbar -->
<div class="a" style="left:41px;top:458px;width:384px;height:17px;background:linear-gradient(#F3F1EC,#FEFEFB)"></div>
<div class="sbtn" style="left:42px;top:459px;width:16px;height:15px"><svg class="a" style="left:4px;top:3px" width="7" height="9"><path d="M5.5 1L2 4.5L5.5 8" stroke="#4D6185" stroke-width="2" fill="none"/></svg></div>
<div class="sbtn" style="left:265px;top:459px;width:16px;height:15px;background:linear-gradient(#C9D8FC,#B8CBF6)"><svg class="a" style="left:3px;top:3px" width="9" height="9"><path d="M0.5 0V8M2.5 0V8M4.5 0V8M6.5 0V8M8.5 0V8" stroke="#EEF3FE" stroke-width="1"/><path d="M1.5 1V9M3.5 1V9M5.5 1V9M7.5 1V9" stroke="#8CA6E0" stroke-width="1"/></svg></div>
<div class="sbtn" style="left:408px;top:459px;width:16px;height:15px"><svg class="a" style="left:4px;top:3px" width="7" height="9"><path d="M1.5 1L5 4.5L1.5 8" stroke="#4D6185" stroke-width="2" fill="none"/></svg></div>
<!-- option bar -->
<div class="a" style="left:443px;top:135px;width:1px;height:341px;background:#FFFFFF"></div><div class="a" style="left:446px;top:135px;width:1px;height:341px;background:#D6D2C2"></div>
<div class="a" style="left:448px;top:134px;width:247px;height:19px;border:1px solid #C9C6B5;border-radius:2px;background:#ECE9D8"></div>
<div class="a" style="left:453px;top:138px;font-size:12px">Option Bar</div>
<div class="a" style="left:680px;top:138px;width:13px;height:13px;border:1px solid #2A4D80;border-radius:2px;background:#fff"><svg class="a" style="left:1px;top:1px" width="9" height="9"><path d="M1.5 1.5L8.5 8.5M8.5 1.5L1.5 8.5" stroke="#000" stroke-width="1.5"/></svg></div>
<div class="obtn" style="top:156px">Color options</div>
<!-- color panel -->
<div class="combo" style="left:455px;top:187px;width:132px;height:21px"><div class="a" style="left:4px;top:3px;font-size:11.5px">Text</div><div class="dd"></div></div>
<div class="a" style="left:593px;top:191px;width:13px;height:13px;border:1px solid #1C5180;background:linear-gradient(135deg,#DCDBD5,#fff)"></div>
<div class="a" style="left:610px;top:191px;font-size:11.5px;letter-spacing:-0.2px">Texture</div>
<div class="a" style="left:654px;top:191px;width:13px;height:13px;border:1px solid #CAC8BB;background:#fff"></div>
<div class="a" style="left:670px;top:191px;font-size:11.5px;letter-spacing:-0.2px;color:#ACA899">Tint</div>
<div class="a" style="left:456px;top:215px;width:162px;height:93px;border-top:1px solid #9D9A89;border-left:1px solid #9D9A89;background:linear-gradient(to bottom,rgba(0,0,0,0),rgba(0,0,0,0.72) 100%),linear-gradient(to right,#FF0000,#FFFFFF)"></div>
<svg class="a" style="left:625px;top:214px" width="64" height="48"><defs><pattern id="hp" width="8" height="8" patternUnits="userSpaceOnUse" x="0" y="0"><rect width="8" height="8" fill="#fff"/><path d="M0 0L8 8M8 0L0 8" stroke="#111" stroke-width="1" shape-rendering="crispEdges"/></pattern></defs><rect width="64" height="48" fill="url(#hp)"/></svg>
<div class="a" style="left:626px;top:273px;font-size:12px">H</div>
<div class="a" style="left:637px;top:269px;width:38px;height:20px;background:#fff;border:1px solid #7F9DB9"></div>
<div class="spin" style="left:676px;top:271px;height:18px;width:13px"></div>
<div class="a" style="left:626px;top:299px;width:10px;height:9px;overflow:hidden"><div class="a" style="left:0;top:0;font-size:12px">S</div></div>
<div class="a" style="left:637px;top:296px;width:38px;height:13px;background:#fff;border:1px solid #7F9DB9;border-bottom:none"></div>
<div class="a" style="left:676px;top:297px;width:13px;height:12px;border:1px solid #1C3F6E;border-bottom:none;border-radius:3px 3px 0 0;background:#fff"><div class="a" style="left:2px;top:2px;border-left:4px solid transparent;border-right:4px solid transparent;border-bottom:4px solid #000"></div></div>
<div class="obtn" style="top:309px">Extrusion options</div>
<div class="obtn" style="top:333px">Design options</div>
<div class="obtn" style="top:357px">Bevel options</div>
<div class="obtn" style="top:381px">Shadow options</div>
<div class="obtn" style="top:405px">Texture options</div>
<div class="obtn" style="top:429px">View options</div>
<div class="obtn" style="top:453px">Animation options</div>
<!-- status bar -->
<div class="sep" style="left:507px;top:480px;height:16px"></div>
<div class="a" style="left:515px;top:481px;font-size:13px">383 × 322</div>
<div class="sep" style="left:580px;top:480px;height:16px"></div>
<div class="a" style="left:589px;top:481px;font-size:13px;letter-spacing:0.3px">42° : -18° : 0°</div>
<div class="sep" style="left:677px;top:480px;height:16px"></div>
<div class="a" style="left:684px;top:484px;width:12px;height:12px;background-image:radial-gradient(circle at 1px 1px,#B5B2A2 0,#B5B2A2 1px,transparent 1.2px);background-size:4px 4px;clip-path:polygon(100% 0,100% 100%,0 100%)"></div>
</body></html>
